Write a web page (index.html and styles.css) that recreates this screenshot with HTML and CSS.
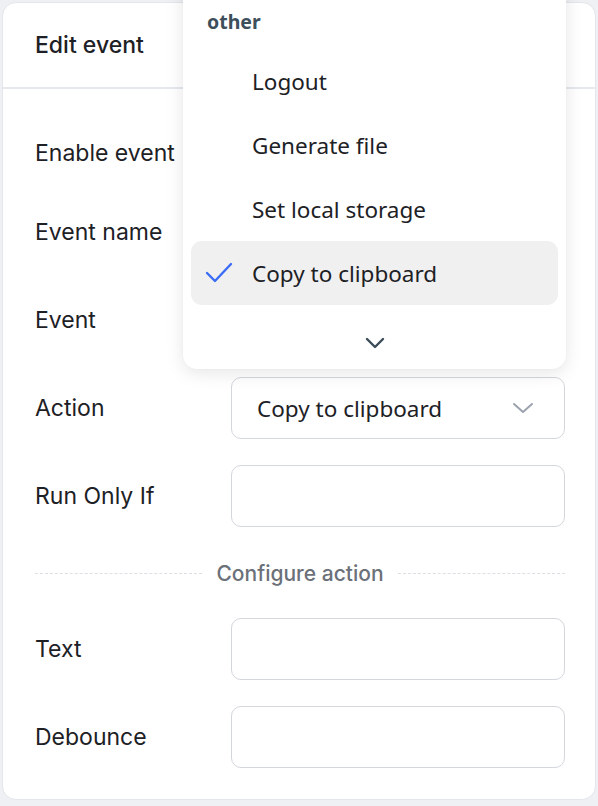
FILE: index.html
```
<!DOCTYPE html>
<html>
<head>
<meta charset="UTF-8">
<title>Edit event</title>
<link rel="stylesheet" href="styles.css">
</head>
<body>

<!-- card -->
<div class="card">
	<div class="card-header">Edit event</div>

	<div class="card-body">
		<div class="row row-switch">
			<div class="label">Enable event</div>
			<div class="field"></div>
		</div>
		<div class="row">
			<div class="label">Event name</div>
			<div class="field"><div class="input"></div></div>
		</div>
		<div class="row">
			<div class="label">Event</div>
			<div class="field"><div class="input"></div></div>
		</div>
		<div class="row">
			<div class="label">Action</div>
			<div class="field">
				<div class="input select">
					<span>Copy to clipboard</span>
					<svg width="22" height="12" viewBox="0 0 22 12"><polyline points="2,2 11,10 20,2" fill="none" stroke="#9ca3af" stroke-width="2" stroke-linecap="round" stroke-linejoin="round"/></svg>
				</div>
			</div>
		</div>
		<div class="row">
			<div class="label">Run Only If</div>
			<div class="field"><div class="input"></div></div>
		</div>

		<div class="divider"><span>Configure action</span></div>

		<div class="row">
			<div class="label">Text</div>
			<div class="field"><div class="input"></div></div>
		</div>
		<div class="row">
			<div class="label">Debounce</div>
			<div class="field"><div class="input"></div></div>
		</div>
	</div>

	<!-- dropdown menu -->
	<div class="menu">
		<div class="menu-group">other</div>
		<div class="menu-item">Logout</div>
		<div class="menu-item">Generate file</div>
		<div class="menu-item">Set local storage</div>
		<div class="menu-item selected">
			<svg class="check" width="28" height="22" viewBox="0 0 28 22"><polyline points="2,11 10,19 26,2" fill="none" stroke="#3b6cf5" stroke-width="2.4" stroke-linecap="round" stroke-linejoin="round"/></svg>
			Copy to clipboard
		</div>
		<div class="menu-more">
			<svg width="20" height="12" viewBox="0 0 20 12"><polyline points="2,2 10,10 18,2" fill="none" stroke="#3b4c58" stroke-width="2.4" stroke-linecap="round" stroke-linejoin="round"/></svg>
		</div>
	</div>
</div>

</body>
</html>
```

FILE: styles.css
```
/* -------------------------------------
		GLOBAL
------------------------------------- */
* {
	margin: 0;
	padding: 0;
	box-sizing: border-box;
}

body {
	background: #eef0f3;
	font-family: Inter, "Liberation Sans", sans-serif;
	color: #1d2125;
	-webkit-font-smoothing: antialiased;
	padding: 2px;
	height: 806px;
	overflow: hidden;
}

/* -------------------------------------
		CARD
------------------------------------- */
.card {
	position: relative;
	background: #fff;
	border: 1px solid #e3e6ea;
	border-radius: 14px;
	width: 594px;
	height: 798px;
}

.card-header {
	height: 86px;
	display: flex;
	align-items: center;
	padding-left: 32px;
	font-size: 23px;
	font-weight: 500;
	border-bottom: 2px solid #e5e8ec;
}

.card-body {
	padding: 42px 30px 0 32px;
}

.row {
	display: flex;
	align-items: center;
	height: 62px;
	margin-bottom: 26px;
}

.row-switch {
	height: 44px;
}

.label {
	width: 196px;
	font-size: 23px;
}

.field {
	flex: 1;
}

.input {
	height: 62px;
	border: 1.5px solid #d3d6db;
	border-radius: 10px;
	background: #fff;
}

.select {
	display: flex;
	align-items: center;
	justify-content: space-between;
	padding: 0 30px 0 25px;
	font-family: "Noto Sans", sans-serif;
	font-size: 22.5px;
}

/* -------------------------------------
		DIVIDER
------------------------------------- */
.divider {
	display: flex;
	align-items: center;
	gap: 14px;
	margin: 34px 0 32px;
	font-size: 21px;
	font-weight: 500;
	color: #6b7079;
}

.divider::before, .divider::after {
	content: "";
	flex: 1;
	border-top: 1.5px dashed #dcdfe3;
}

/* -------------------------------------
		MENU
------------------------------------- */
.menu {
	position: absolute;
	left: 180px;
	top: -30px;
	width: 383px;
	background: #fff;
	border-radius: 14px;
	box-shadow: 0 4px 18px rgba(0, 0, 0, 0.10), 0 0 2px rgba(0, 0, 0, 0.04);
	padding: 34px 8px 0;
	font-family: "Noto Sans", sans-serif;
}

.menu-group {
	padding-left: 16px;
	font-size: 19.5px;
	font-weight: 700;
	color: #3d4f5b;
	height: 32px;
	line-height: 30px;
	margin-bottom: 10px;
}

.menu-item {
	height: 64px;
	display: flex;
	align-items: center;
	padding-left: 61px;
	font-size: 22.5px;
	color: #1d2125;
	border-radius: 11px;
}

.menu-item.selected {
	background: #f0f0f1;
	padding-left: 14px;
	gap: 19px;
}

.menu-more {
	height: 64px;
	display: flex;
	align-items: flex-start;
	justify-content: center;
	padding-top: 32px;
}
```
